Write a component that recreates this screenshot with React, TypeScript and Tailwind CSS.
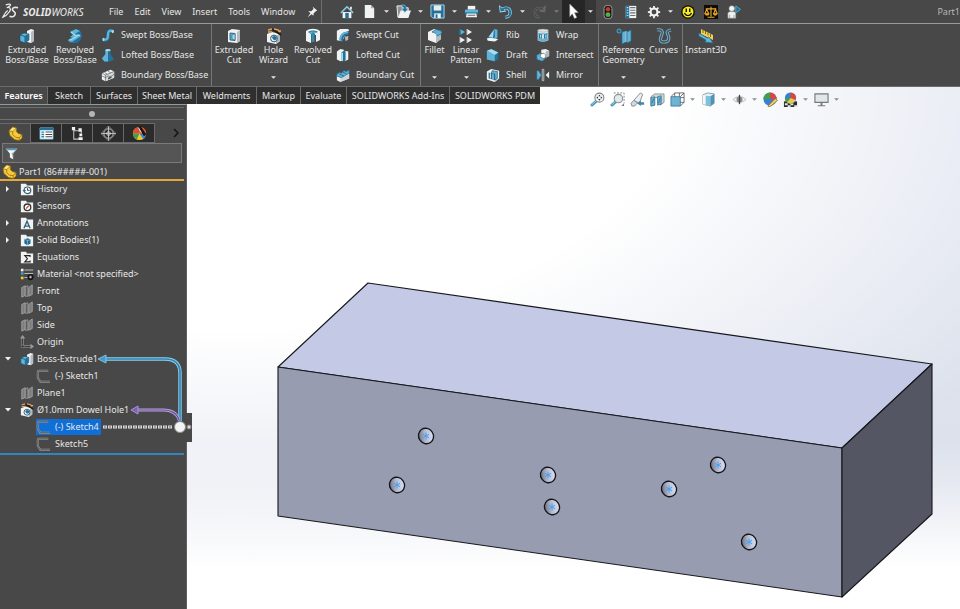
import React from "react";
import clsx from "clsx";

const LIGHT = "#f1f3f3";
const SHADE = "#b4babd";
const BLUE = "#5fb4d8";
const DEEP = "#23709a";
const SKY = "#a9dcf0";

// every drawing uses a 16 x 16 grid
const drawings: Record<string, React.ReactNode> = {
  extrudedBoss: (
    <>
      <path d="M8 3l4-2 3 1v11l-3 2-4-1z" fill={LIGHT} />
      <path d="M12 4l3-2v11l-3 2z" fill={SHADE} />
      <path d="M1 7l4-2 5 1v6l-4 3-5-2z" fill={BLUE} stroke="#174f6d" strokeWidth=".6" />
      <path d="M1 7l5 1.5 4-2.5M6 8.500V15" fill="none" stroke="#174f6d" strokeWidth=".8" />
      <path d="M6 8.500l4-2.500v6l-4 3z" fill={DEEP} />
    </>
  ),
  revolvedBoss: (
    <>
      <path d="M3 4c3-3 9-3 11 0 2 4 0 9-4 11H3c-2-1-1-4 1-4h4z" fill={DEEP} />
      <path d="M3 4l6-3 4 2-7 4 5-1 3 2-9 6-4-1 1-2 4-1-3-1 4-3z" fill={BLUE} />
      <path d="M4 4l5 4 4-1M3 12l6-3" stroke={SKY} strokeWidth="1.200" fill="none" />
    </>
  ),
  sweptBoss: (
    <>
      <path d="M3 13.500c4 1 5-1 5-5s1-6.500 5.500-5" fill="none" stroke={DEEP} strokeWidth="4" />
      <path d="M3 13c4 1 5-1 5-5s1-6 5.500-4.500" fill="none" stroke={BLUE} strokeWidth="2.600" />
      <ellipse cx="13.500" cy="4" rx="1.300" ry="2" fill={SKY} />
      <ellipse cx="2.800" cy="13.200" rx="1.200" ry="2" fill={SKY} />
    </>
  ),
  loftedBoss: (
    <>
      <path d="M5 2h6v5l4 6-5 2.500H4L1 12l4-5z" fill={DEEP} />
      <path d="M5 2h3v13.500H4L1 12l4-5z" fill={BLUE} />
      <ellipse cx="8" cy="2.500" rx="3" ry="1.300" fill={SKY} />
    </>
  ),
  boundaryBoss: (
    <>
      <path d="M1 6l10-4 4 2v7L5 15l-4-2z" fill={LIGHT} />
      <path d="M5 8l10-4v7L5 15z" fill="#d4d8d9" />
      <path d="M1 6l4 2 10-4M5 8v7M1 9l4 2 3-2 3 1 4-3M8 3.500l3 2M4 5l3 2" fill="none" stroke="#5d6265" strokeWidth=".8" />
      <path d="M8 11l4-1.500v2L8 13z" fill="#4b4f51" />
    </>
  ),
  extrudedCut: (
    <>
      <path d="M2 3l4-2 8 1v11l-3 2-9-1z" fill={LIGHT} />
      <path d="M11 4l3-2v11l-3 2z" fill={SHADE} />
      <path d="M4 5l5 .5v7L4 12z" fill={BLUE} stroke="#174f6d" strokeWidth=".8" />
      <path d="M6 7l3-1.500v7L6 10.500z" fill={SKY} stroke="#174f6d" strokeWidth=".5" />
    </>
  ),
  holeWizard: (
    <>
      <path d="M1 6l5-2 8 2v7l-4 3-9-2z" fill={LIGHT} />
      <path d="M10 8l4-2v7l-4 3z" fill={SHADE} />
      <circle cx="8" cy="10.500" r="3.400" fill={LIGHT} stroke="#2c5970" strokeWidth="1" />
      <path d="M6 9c2-2 4-1 5 1-1 3-4 3-5-1z" fill={DEEP} />
      <path d="M6 1l9 6" stroke="#2a1b14" strokeWidth="2" />
      <path d="M2 2l4-1M8 1l4 1 2 2M2 4h4M12 3h3" stroke="#e7a35c" strokeWidth="1.400" />
    </>
  ),
  revolvedCut: (
    <>
      <path d="M1 3c4-3 10-3 14 0v9l-4 2V7H6v8l-5-2z" fill={LIGHT} />
      <path d="M3 4c3-2 7-2 10 0l-3 1v9l-2-1-2 2V6z" fill={DEEP} />
      <path d="M4 4.500c2-1.500 6-1.500 8 0L9 6v8H7V6z" fill={BLUE} />
      <path d="M8 4.500V14" stroke="#174f6d" strokeWidth=".9" />
    </>
  ),
  sweptCut: (
    <>
      <path d="M1 3l4-2h9l1 2-4 2v2l-4 8-6-1z" fill={LIGHT} />
      <path d="M4 14C4 8 7 4 14 4v4c-4 0-6 2-6 7z" fill={DEEP} />
      <path d="M4 14C4 8 7 4 14 4v2c-5 0-8 3-8 8.500z" fill={BLUE} />
      <path d="M10 10l4-1v4l-3 2z" fill={SHADE} />
    </>
  ),
  loftedCut: (
    <>
      <path d="M1 4l4-3 4 1v12l-4 1-4-2z" fill={LIGHT} />
      <path d="M10 3l4 1v9l-4 2z" fill={LIGHT} />
      <path d="M6 5l3-2 2 1v10l-3 1.500-2-2z" fill={DEEP} />
      <path d="M6 5l2 .5v10l-2-2z" fill={SKY} />
    </>
  ),
  boundaryCut: (
    <>
      <path d="M1 8l10-3 4 1v6L5 16l-4-2z" fill={LIGHT} />
      <path d="M5 11l10-4v5L5 16z" fill="#cfd4d6" />
      <path d="M1 7l3-2 2 1 3-3 3 1 3-2v4L6 11 1 9z" fill={BLUE} stroke={DEEP} strokeWidth=".9" />
      <path d="M4 7l5 2M8 5l4 1.500" stroke="#174f6d" strokeWidth=".8" />
    </>
  ),
  fillet: (
    <>
      <path d="M1 4l6-3 7 2v8l-5 4-8-3z" fill={LIGHT} />
      <path d="M9 8l5-3v6l-5 4z" fill={SHADE} />
      <path d="M5 4l4-2.500 5 1.500c1 1 1 2 0 3L10 8c0-2-1-3-5-4z" fill={BLUE} stroke={DEEP} strokeWidth=".8" />
    </>
  ),
  linearPattern: (
    <>
      <path d="M2 1l5 3-5 3z" fill={BLUE} />
      <path d="M9 1l5 3-5 3zM2 9l5 3-5 3zM9 9l5 3-5 3z" fill={LIGHT} />
      <path d="M2 1v6" stroke={DEEP} strokeWidth="1.500" />
      <path d="M9 1v6M2 9v6M9 9v6" stroke={SHADE} strokeWidth="1" />
    </>
  ),
  rib: (
    <>
      <path d="M9 1l4 1v9l-3 4-9-2v-2l6-3z" fill={DEEP} />
      <path d="M9 2L3 10l5 1z" fill={SKY} />
      <path d="M9 1l4 1v9l-3 1V3z" fill={BLUE} />
      <path d="M1 12l3-1 7 1 3 1-4 2.500-8-1z" fill={LIGHT} />
    </>
  ),
  draft: (
    <>
      <path d="M1 3l5-2 8 4v8l-4 2-9-2z" fill={DEEP} />
      <path d="M1 3l9 5v7l-9-2z" fill={BLUE} />
      <path d="M1 3l5-2 8 4-4 3z" fill={SKY} />
    </>
  ),
  shell: (
    <>
      <path d="M1 4l5-3 9 2v9l-5 4-9-3z" fill={LIGHT} />
      <path d="M3 5l8 2v7L3 12z" fill={DEEP} />
      <path d="M7 3l6 1v8l-3 2V7L6 6z" fill={BLUE} stroke="#174f6d" strokeWidth=".7" />
      <path d="M5 6v6M8 7v6" stroke={LIGHT} strokeWidth="1" />
    </>
  ),
  wrap: (
    <>
      <path d="M2 2h12v12c-3 2-9 2-12 0z" fill={LIGHT} />
      <ellipse cx="8" cy="3" rx="6" ry="1.800" fill="#dfe3e4" stroke="#7c8386" strokeWidth=".5" />
      <path d="M2 5c4 1.500 8 1.500 12 0v2H2zM2 12h12v2c-4 1.500-8 1.500-12 0z" fill={BLUE} />
      <path d="M3 7h4v5H3zM9 7h4v5H9z" fill={DEEP} />
      <path d="M4.500 8h1.500v3H4.500zM10.500 8H12v3h-1.500z" fill={SKY} />
    </>
  ),
  intersect: (
    <>
      <path d="M6 2l5-1 4 2v6l-4 2-5-2z" fill={LIGHT} />
      <path d="M11 4l4-1v6l-4 2z" fill={SHADE} />
      <path d="M1 8l4-2 3 1v4l3 1-4 3-6-2z" fill={BLUE} stroke={DEEP} strokeWidth=".8" />
      <path d="M5 7l4-1 2 2v3l-3 1-3-2z" fill="#fff" stroke="#555" strokeWidth=".7" />
    </>
  ),
  mirror: (
    <>
      <path d="M1 3h2l3 5-3 5H1z" fill={BLUE} stroke={DEEP} strokeWidth=".6" />
      <path d="M15 4l-4 4 4 4z" fill={LIGHT} />
      <path d="M7 1.500h2v13H7z" fill="#6e7679" stroke="#d7dbdc" strokeWidth=".7" />
    </>
  ),
  reference: (
    <>
      <path d="M6 4l4-1v11l-4 2zM11 4l4-2v11l-4 2z" fill={BLUE} stroke={DEEP} strokeWidth=".7" />
      <path d="M10 3v11" stroke="#d7f0fa" strokeWidth=".8" />
      <circle cx="3" cy="3" r="2" fill="none" stroke={BLUE} strokeWidth="1" />
      <path d="M0 3h6M3 0v6" stroke={DEEP} strokeWidth=".7" />
    </>
  ),
  curves: (
    <>
      <path d="M1 2c4-1 6 1 5 4s-4 8 2 8 5-5 4-7-2-4 3-5" fill="none" stroke="#7fb2cb" strokeWidth="3.200" />
      <path d="M1 2c4-1 6 1 5 4s-4 8 2 8 5-5 4-7-2-4 3-5" fill="none" stroke="#39576a" strokeWidth="1.400" />
    </>
  ),
  instant3d: (
    <>
      <path d="M3 1l12 6v5L3 6z" fill="#f5cf56" />
      <path d="M5 2v3M7.500 3v3M10 4.500v3M12.500 6v3" stroke="#7a5a10" strokeWidth=".9" />
      <path d="M1 5l8 5 2-1 4 6-8-1 1-2-7-4z" fill={BLUE} stroke={DEEP} strokeWidth=".7" />
    </>
  ),
  pin: (
    <path d="M9 1l6 5-2 1-3 3v3L7.500 11 2 15l4-5.500L3 7h4l3-3z" fill={LIGHT} />
  ),
  home: (
    <>
      <path d="M3 8h10v7H3z" fill={LIGHT} />
      <path d="M6 9h4v6H6z" fill={DEEP} />
      <path d="M1 9l7-7 7 7" fill="none" stroke="#8fcbe3" strokeWidth="1.800" />
      <path d="M11.500 2h2v3h-2z" fill={LIGHT} />
    </>
  ),
  blank: (
    <>
      <path d="M3 1h6.500L13 4.500V15H3z" fill={LIGHT} />
      <path d="M9.500 1v3.500H13z" fill="#a7adaf" />
    </>
  ),
  open: (
    <>
      <path d="M1 2h5l1 2h6v10H2z" fill="#8d9496" stroke={LIGHT} strokeWidth="1" />
      <path d="M5 7h11l-3 8H2z" fill={LIGHT} />
      <path d="M6 1c4 0 5 1 5 4h2l-3.500 4L6 5h2c0-1.500 0-2-2-2z" fill={DEEP} stroke={SKY} strokeWidth=".6" />
    </>
  ),
  save: (
    <>
      <path d="M1 1h14v14H3l-2-2z" fill={DEEP} stroke={SKY} strokeWidth="1" />
      <path d="M4 1.500h8V7H4z" fill="#e8eced" />
      <path d="M4.500 10h7v5h-7z" fill={LIGHT} />
      <path d="M6 11h2v4H6z" fill={DEEP} />
    </>
  ),
  print: (
    <>
      <path d="M4 2h8v4H4z" fill={LIGHT} />
      <path d="M1 6h14v5H1z" fill={BLUE} />
      <path d="M1 9h14v2H1z" fill={DEEP} />
      <path d="M3 10h10l1 4H2z" fill={LIGHT} />
      <path d="M4 12h8" stroke="#596063" strokeWidth="1" />
    </>
  ),
  undo: (
    <>
      <path d="M4 6c4-3 9-2 9 3 0 3-2 5-5 5" fill="none" stroke={SKY} strokeWidth="3.400" />
      <path d="M1 1l1 8 7-1z" fill={SKY} />
      <path d="M4 6c4-3 9-2 9 3 0 3-2 5-5 5" fill="none" stroke={DEEP} strokeWidth="2" />
      <path d="M2 3l.8 5 4.500-.7z" fill={DEEP} />
    </>
  ),
  redo: (
    <>
      <path d="M12 6c-4-3-9-2-9 3 0 3 2 5 5 5" fill="none" stroke="#686868" strokeWidth="2.800" />
      <path d="M15 1l-1 8-7-1z" fill="#686868" />
      <path d="M12 6c-4-3-9-2-9 3 0 3 2 5 5 5" fill="none" stroke="#484848" strokeWidth="1.400" />
    </>
  ),
  cursor: (
    <path d="M4 0l9 9-4 .3 2.500 5-2.500 1.200-2.300-5L4 13.500z" fill="#fff" stroke="#9b9b9b" strokeWidth=".5" />
  ),
  traffic: (
    <>
      <rect x="3.500" y="0.500" width="9" height="15" rx="3.500" fill="#141414" stroke="#a8a8a8" strokeWidth="1" />
      <circle cx="8" cy="4.800" r="2.600" fill="#c23b2c" />
      <circle cx="8" cy="11" r="2.800" fill="#5dab48" />
    </>
  ),
  options: (
    <>
      <path d="M2 1h12v14H2z" fill={LIGHT} />
      <path d="M2 1h4v14H2z" fill={DEEP} />
      <path d="M3 3h2M3 6h2M3 9h2M3 12h2" stroke={SKY} strokeWidth="1.300" />
      <path d="M7 3h6M7 6h6M7 9h6M7 12h6" stroke="#6b7174" strokeWidth="1.300" />
    </>
  ),
  gear: (
    <>
      <circle cx="8" cy="8" r="4" fill="none" stroke={LIGHT} strokeWidth="2.400" />
      <path d="M8 1v3M8 12v3M1 8h3M12 8h3M3 3l2 2M11 11l2 2M13 3l-2 2M5 11l-2 2" stroke={LIGHT} strokeWidth="2" />
    </>
  ),
  smiley: (
    <>
      <circle cx="8" cy="8" r="7.800" fill="#0d0d0d" />
      <circle cx="8" cy="8" r="6.300" fill="#f8ec1c" />
      <path d="M6 4v4M10 4v4" stroke="#111" strokeWidth="1.600" />
      <path d="M4 9c1 4 7 4 8 0" fill="none" stroke="#111" strokeWidth="1.400" />
    </>
  ),
  scales: (
    <>
      <path d="M0 0h16v16H0z" fill="#0e0c08" />
      <path d="M8 2v11M4 14h8M2 4.500h12M3 5l-2 5h4.500zM13 5l-2 5h4z" fill="none" stroke="#e9a92d" strokeWidth="1.300" />
      <path d="M1 10h5l-1 2H2zM10.500 10H15l-1 2h-2.500z" fill="#e9a92d" />
    </>
  ),
  user: (
    <>
      <circle cx="5.500" cy="4" r="3.200" fill={LIGHT} stroke="#8c8c8c" strokeWidth=".6" />
      <path d="M1 15V9c1-2 8-2 9 0v6z" fill={LIGHT} stroke="#8c8c8c" strokeWidth=".6" />
      <path d="M3 11v4M8 11v4" stroke="#8c8c8c" strokeWidth=".8" />
      <path d="M10 1l5.500 4L10 9z" fill={DEEP} stroke={BLUE} strokeWidth=".9" />
    </>
  ),
  zoomFit: (
    <>
      <path d="M2 14l4.500-4" stroke="#4a94b8" strokeWidth="3" strokeLinecap="round" />
      <path d="M2 13.500l4-3.500" stroke="#a5d6e9" strokeWidth="1" strokeLinecap="round" />
      <circle cx="10" cy="6" r="4.800" fill="#eef1f3" stroke="#7d8487" strokeWidth="1.100" />
      <path d="M10 2.800l1.200 1.700H8.800zM10 9.200l1.200-1.700H8.800zM6.800 6l1.700-1.200v2.400zM13.200 6l-1.700-1.200v2.400z" fill="#2c3033" />
    </>
  ),
  zoomArea: (
    <>
      <path d="M4 1h11v11" fill="none" stroke="#787e81" strokeWidth="1" strokeDasharray="2 1.500" />
      <path d="M2 14l4-3.500" stroke="#4a94b8" strokeWidth="3" strokeLinecap="round" />
      <path d="M2 13.500l3.500-3" stroke="#a5d6e9" strokeWidth="1" strokeLinecap="round" />
      <circle cx="9" cy="7" r="4.500" fill="#e1e9ed" stroke="#8b9295" strokeWidth="1.200" />
      <path d="M12 15h3v-3z" fill="#787e81" />
    </>
  ),
  previousView: (
    <>
      <path d="M4 9l7-8 2.500 1.500L10 12z" fill="#eceff1" stroke="#868c90" strokeWidth="1" />
      <path d="M1 12l3-3 4 2.500L5 15H2z" fill="#d3d8db" stroke="#868c90" strokeWidth="1" />
      <path d="M7.500 12l4-3v2H15v2.500h-3.500V15z" fill="#3c88ae" />
    </>
  ),
  section: (
    <>
      <path d="M1 5l4-3h10v9l-4 3V6H5v8l-4 1z" fill="#cdd5d9" stroke="#7b8488" strokeWidth=".8" />
      <path d="M1 6l4-1v9l-4 1zM8 5l4-1v9l-4 1z" fill={BLUE} stroke="#3f7690" strokeWidth=".8" />
      <path d="M2 12l2-5M9 12l2-6" stroke={DEEP} strokeWidth=".9" />
    </>
  ),
  orientation: (
    <>
      <path d="M5 1h10v10H5z" fill="#fff" stroke="#565c60" strokeWidth=".9" />
      <path d="M1 5l4-4M11 5l4-4M11 15l4-4M10 1v10M5 6h10" stroke="#565c60" strokeWidth=".9" fill="none" />
      <path d="M1 5h10v10H1z" fill="#6fb4d3" stroke="#3b7693" strokeWidth=".9" />
    </>
  ),
  display: (
    <>
      <path d="M2 3l5-2 7 1v10l-4 3-8-2z" fill="#e4f1f7" stroke="#6f8792" strokeWidth=".8" />
      <path d="M2 3l3 .7v10L2 13z" fill="#f6f8f9" />
      <path d="M5 4l5 .6V15l-5-1z" fill="#7fc0dc" />
      <path d="M10 4.600L14 2v10l-4 3z" fill="#4d94b7" />
    </>
  ),
  eye: (
    <>
      <path d="M1 8c4-4 10-4 14 0-4 4-10 4-14 0z" fill="#f1f1f1" stroke="#b4b4b4" strokeWidth=".9" />
      <circle cx="8" cy="8" r="3.200" fill="#8a8a8a" />
      <path d="M8 3v10" stroke="#444" strokeWidth="1.300" />
    </>
  ),
  appearance: (
    <>
      <circle cx="7.500" cy="7.500" r="7" fill="#3b7fd0" />
      <path d="M7.500 7.500V.5a7 7 0 00-7 7z" fill="#3fa04a" />
      <path d="M7.500 7.500V.5A7 7 0 0114.500 8z" fill="#d9483a" />
      <path d="M6 14l7-7 2.500 2-7 6-3 .8z" fill="#f0cf68" stroke="#7d5b26" strokeWidth=".7" />
    </>
  ),
  scene: (
    <>
      <path d="M1 10h14v6H1z" fill="#2d2d2d" />
      <path d="M2 12h3v2H2zM8 12h3v2H8zM12 14h3v2h-3zM5 14h3v2H5z" fill="#e5e5e5" />
      <circle cx="8" cy="6.500" r="6" fill="#3b7fd0" />
      <path d="M8 6.500V.5a6 6 0 015.500 8z" fill="#d9483a" />
      <path d="M8 6.500l5.500 2A6 6 0 014 11z" fill="#e6c84a" />
      <path d="M8 6.500L4 11A6 6 0 012 6z" fill="#3fa04a" />
    </>
  ),
  monitor: (
    <>
      <path d="M1 2h14v9H1z" fill="#e3e6e8" stroke="#73797c" strokeWidth="1.200" />
      <path d="M7 11h2v3H7zM4 14h8v1.300H4z" fill="#73797c" />
    </>
  ),
  part: (
    <>
      <path d="M1 5l4-4 4 1v4l2 2 4 1v4l-3 2.500-5-1-5-4.500z" fill="#f5c93a" stroke="#8d6a0d" strokeWidth=".8" />
      <path d="M1 5l4 1v3l3 3 4 .5v3M5 6l4-4M12 12.500L15 9" fill="none" stroke="#8d6a0d" strokeWidth=".8" />
      <path d="M5 1.500l3 .8L5 5.200 2.200 4.500z" fill="#fbe58a" />
    </>
  ),
  properties: (
    <>
      <path d="M1 2h14v12H1z" fill="#fff" stroke="#6ab5d6" strokeWidth=".8" />
      <path d="M1 2h14v2.500H1z" fill={DEEP} />
      <path d="M2.500 6.500h3M2.500 9h3M2.500 11.500h3" stroke="#3181ab" strokeWidth="1.500" />
      <path d="M7 6.500h7M7 9h7M7 11.500h7" stroke="#44494b" strokeWidth="1.100" />
    </>
  ),
  config: (
    <>
      <path d="M4 4v10h5M4 5h5M12 5v3" fill="none" stroke="#c4c4c4" strokeWidth="1.100" />
      <path d="M2 1h3.500v3.500H2zM9 2.500h3.500V6H9zM10 8h3v3h-3zM9 12h4.500v3H9z" fill={LIGHT} />
    </>
  ),
  dimxpert: (
    <>
      <circle cx="8" cy="8" r="5" fill="none" stroke="#8f8f8f" strokeWidth="1.600" />
      <path d="M8 0v16M0 8h16" stroke="#c4c4c4" strokeWidth="1" />
      <path d="M8 0L0 8l8 8 8-8z" fill="none" stroke="#8a8a8a" strokeWidth=".9" />
      <circle cx="8" cy="8" r="2" fill="none" stroke="#ddd" strokeWidth=".9" />
    </>
  ),
  displayManager: (
    <>
      <circle cx="8" cy="8" r="7" fill="#f0c832" />
      <path d="M8 8V1a7 7 0 00-7 7z" fill="#e04a38" />
      <path d="M8 8H1a7 7 0 004 6.300z" fill="#3fa04a" />
      <path d="M8 8l7 1a7 7 0 01-3 5z" fill="#3c83d3" />
      <path d="M8 8V1a7 7 0 017 8z" fill="#e04a38" />
      <path d="M8 1l6 9" stroke="#151515" strokeWidth="3" />
      <path d="M7 2l3 5" stroke="#f5f5f5" strokeWidth="1" />
    </>
  ),
  filter: (
    <>
      <path d="M1 2h14l-5 6v7l-4-2V8z" fill="#f4f8fa" />
      <path d="M1 2h14l-1.500 2h-11z" fill="#4a9cc4" />
      <path d="M8 8l6-5-4 5v6z" fill="#9fb4be" />
    </>
  ),
  history: (
    <>
      <path d="M1 2h6l1 2h7v11H1z" fill={LIGHT} />
      <circle cx="8.500" cy="9.500" r="3.800" fill="#fff" stroke="#3d6173" strokeWidth="1.400" />
      <path d="M8.500 7v2.500h2.500" stroke="#222" fill="none" strokeWidth="1" />
      <path d="M3 9l2 3 2-3z" fill={DEEP} />
    </>
  ),
  sensors: (
    <>
      <path d="M1 2h6l1 2h7v11H1z" fill={LIGHT} />
      <circle cx="8.500" cy="9.500" r="3.800" fill="#fff" stroke="#333" strokeWidth="1.500" />
      <path d="M7 11l3-3.500" stroke="#d13a2a" strokeWidth="1.500" />
    </>
  ),
  annotations: (
    <>
      <path d="M1 2h6l1 2h7v11H1z" fill={LIGHT} />
      <path d="M4.500 14L8 6l3.500 8M6 11.500h4" stroke="#2a5f7c" strokeWidth="1.500" fill="none" />
    </>
  ),
  bodies: (
    <>
      <path d="M1 2h6l1 2h7v11H1z" fill={LIGHT} />
      <path d="M5 7l4-1 3 1.500V12l-3.500 2L5 12z" fill="#1d6b94" />
      <path d="M5 7l3.500 1.500L12 7.500M8.500 8.500V14" stroke="#8ecbe5" strokeWidth=".8" fill="none" />
    </>
  ),
  equations: (
    <>
      <path d="M1 2h6l1 2h7v11H1z" fill={LIGHT} />
      <path d="M11.500 8V6.500h-6l3 3.500-3 3.500h6V12" stroke="#222" strokeWidth="1.300" fill="none" />
    </>
  ),
  material: (
    <>
      <path d="M1 2h3v3H1z" fill={LIGHT} />
      <path d="M1 6h3v3H1z" fill="#3d9bca" />
      <path d="M1 11h3v3H1z" fill="#f0cb35" />
      <path d="M5 3.500h10M5 7.500h10M5 12h4" stroke="#b9b9b9" strokeWidth="1.200" />
      <circle cx="12" cy="11.500" r="2.800" fill="#555" stroke="#111" strokeWidth="1.500" />
      <circle cx="12" cy="11.500" r="1" fill="#ddd" />
    </>
  ),
  plane: (
    <>
      <path d="M2 4l4-2v11l-4 2zM10 4l4-3v11l-4 2z" fill="#7d7d7d" stroke="#a8a8a8" strokeWidth=".9" />
      <path d="M6 3l3-1v12H6z" fill="#5d5d5d" stroke="#a8a8a8" strokeWidth=".8" />
    </>
  ),
  origin: (
    <>
      <path d="M3 2v11h11" fill="none" stroke="#9b9b9b" strokeWidth="2.600" />
      <path d="M3 2v11h11" fill="none" stroke="#222" strokeWidth="1" />
      <path d="M0 4l3-4 3 4zM12 10l4 3-4 3z" fill="#9b9b9b" />
      <circle cx="3" cy="13" r="1.700" fill="#333" stroke="#9b9b9b" strokeWidth=".6" />
    </>
  ),
  sketch: (
    <>
      <path d="M14 2H3c-1 0-1 0-1 1v7l3 4.500h11" fill="none" stroke="#9d9d9d" strokeWidth="2.200" />
      <path d="M14 2H3c-1 0-1 0-1 1v7l3 4.500h11" fill="none" stroke="#4a4a4a" strokeWidth=".9" />
    </>
  ),
};

function Icon(props: { name: string; className?: string }) {
  return (
    <svg
      viewBox="0 0 16 16"
      aria-hidden="true"
      className={clsx("shrink-0", props.className ?? "size-4")}
    >
      {drawings[props.name]}
    </svg>
  );
}

function Caret() {
  return (
    <svg viewBox="0 0 6 3" aria-hidden="true" className="h-[3px] w-[5px]">
      <path d="M0 0h6L3 3z" fill="currentColor" />
    </svg>
  );
}

const menus = ["File", "Edit", "View", "Insert", "Tools", "Window"];

const quickFiles = [
  { icon: "blank", label: "New" },
  { icon: "open", label: "Open" },
  { icon: "save", label: "Save" },
  { icon: "print", label: "Print" },
  { icon: "undo", label: "Undo" },
  { icon: "redo", label: "Redo", disabled: true },
  { icon: "cursor", label: "Select", active: true },
];

function QuickButton(props: { icon: string; label: string }) {
  return (
    <button aria-label={props.label} className="flex h-full w-[23px] items-center justify-center">
      <Icon name={props.icon} className="size-[14px]" />
    </button>
  );
}

function TitleBar() {
  return (
    <header className="flex h-6 items-center border-b border-[#969b9b] bg-[#484848]">
      <div className="flex w-[103px] items-center gap-1 pl-[2px] text-[#e8e8e8]">
        <svg viewBox="0 0 18 18" aria-hidden="true" className="size-[17px]">
          <path
            d="M4 2c3-1 5-1 5 0S7 4 5 5c3-1 5 1 3 4s-4 5-7 6c1-2 2-5 5-7"
            fill="none"
            stroke="currentColor"
            strokeWidth="1.400"
          />
          <path
            d="M17 5c-3-1-6 0-6 2s4 2 3 5-4 3-6 2"
            fill="none"
            stroke="currentColor"
            strokeWidth="1.700"
          />
        </svg>
        <span className="text-[10px] italic">
          <b>SOLID</b>WORKS
        </span>
      </div>

      <nav className="flex h-full items-center border-r border-[#6e6e6e] pr-[3px]">
        {menus.map((menu) => (
          <button key={menu} className="pr-[5px] pl-[6px]">
            {menu}
          </button>
        ))}
        <button aria-label="Keep menu open" className="pl-[6px]">
          <Icon name="pin" className="size-3" />
        </button>
      </nav>

      <div className="ml-[13px] flex h-full items-center">
        <QuickButton icon="home" label="Home" />
        {quickFiles.map((item) => (
          <div
            key={item.label}
            className={clsx(
              "flex h-full w-[34px] items-center",
              item.active && "bg-[#363636]",
              item.disabled ? "text-[#7c7c7c]" : "text-[#e4e4e4]"
            )}
          >
            <button
              aria-label={item.label}
              disabled={item.disabled}
              className={clsx(
                "flex h-full w-[23px] items-center justify-center",
                item.active && "bg-[#262626]"
              )}
            >
              <Icon name={item.icon} className="size-[15px]" />
            </button>
            <button aria-label={`${item.label} menu`} className="flex w-[11px] justify-center">
              <Caret />
            </button>
          </div>
        ))}
        <QuickButton icon="traffic" label="Rebuild" />
        <QuickButton icon="options" label="File properties" />
        <QuickButton icon="gear" label="Options" />
        <button aria-label="Options menu" className="flex w-[11px] justify-center">
          <Caret />
        </button>
        <QuickButton icon="smiley" label="Feedback" />
        <QuickButton icon="scales" label="Compare" />
        <QuickButton icon="user" label="Login" />
      </div>

      <span className="ml-auto text-[#b9b9b9]">Part1</span>
    </header>
  );
}

interface ToolProps {
  icon: string;
  label: string;
  menu?: boolean;
  width: string;
}

function BigTool({ icon, label, menu, width }: ToolProps) {
  return (
    <button className={clsx("flex h-full flex-col items-center pt-1 pb-[7px]", width)}>
      <Icon name={icon} />
      <span className="mt-px text-center leading-[10px] whitespace-pre">{label}</span>
      {menu && (
        <span className="mt-auto">
          <Caret />
        </span>
      )}
    </button>
  );
}

function ToolColumn({ tools, width }: { tools: string[][]; width?: string }) {
  return (
    <div className={clsx("flex flex-col pt-px", width)}>
      {tools.map(([icon, label]) => (
        <button key={label} className="flex h-5 items-center gap-[6px] whitespace-nowrap">
          <Icon name={icon} className="size-[14px]" />
          {label}
        </button>
      ))}
    </div>
  );
}

function Ribbon() {
  return (
    <section
      aria-label="Features"
      className="flex h-[63px] items-stretch divide-x divide-[#767676] border-b border-[#6b6b6b] bg-[#484848]"
    >
      <div className="flex w-[212px] pl-[3px]">
        <BigTool icon="extrudedBoss" label={"Extruded\nBoss/Base"} width="w-[48px]" />
        <BigTool icon="revolvedBoss" label={"Revolved\nBoss/Base"} width="w-[48px]" />
        <ToolColumn
          width="ml-[2px]"
          tools={[
            ["sweptBoss", "Swept Boss/Base"],
            ["loftedBoss", "Lofted Boss/Base"],
            ["boundaryBoss", "Boundary Boss/Base"],
          ]}
        />
      </div>
      <div className="flex w-[209px] pl-[2px]">
        <BigTool icon="extrudedCut" label={"Extruded\nCut"} width="w-[40px]" />
        <BigTool icon="holeWizard" label={"Hole\nWizard"} width="w-[39px]" menu />
        <BigTool icon="revolvedCut" label={"Revolved\nCut"} width="w-[40px]" />
        <ToolColumn
          width="ml-[3px]"
          tools={[
            ["sweptCut", "Swept Cut"],
            ["loftedCut", "Lofted Cut"],
            ["boundaryCut", "Boundary Cut"],
          ]}
        />
      </div>
      <div className="flex w-[178px]">
        <BigTool icon="fillet" label="Fillet" width="w-[27px]" menu />
        <BigTool icon="linearPattern" label={"Linear\nPattern"} width="w-[36px]" menu />
        <ToolColumn
          width="ml-[2px] w-[50px]"
          tools={[
            ["rib", "Rib"],
            ["draft", "Draft"],
            ["shell", "Shell"],
          ]}
        />
        <ToolColumn
          tools={[
            ["wrap", "Wrap"],
            ["intersect", "Intersect"],
            ["mirror", "Mirror"],
          ]}
        />
      </div>
      <div className="flex w-[84px]">
        <BigTool icon="reference" label={"Reference\nGeometry"} width="w-[49px]" menu />
        <BigTool icon="curves" label="Curves" width="w-[31px]" menu />
      </div>
      <div className="flex">
        <BigTool icon="instant3d" label="Instant3D" width="w-[46px]" />
      </div>
    </section>
  );
}

const ribbonTabs = [
  { label: "Features", width: "w-[48px]" },
  { label: "Sketch", width: "w-[43px]" },
  { label: "Surfaces", width: "w-[47px]" },
  { label: "Sheet Metal", width: "w-[59px]" },
  { label: "Weldments", width: "w-[60px]" },
  { label: "Markup", width: "w-[44px]" },
  { label: "Evaluate", width: "w-[46px]" },
  { label: "SOLIDWORKS Add-Ins", width: "w-[103px]" },
  { label: "SOLIDWORKS PDM", width: "w-[90px]" },
];

const viewTools = [
  { icon: "zoomFit", label: "Zoom to fit" },
  { icon: "zoomArea", label: "Zoom to area" },
  { icon: "previousView", label: "Previous view" },
  { icon: "section", label: "Section view" },
  { icon: "orientation", label: "View orientation", menu: true },
  { icon: "display", label: "Display style", menu: true },
  { icon: "eye", label: "Hide/show items", menu: true },
  { icon: "appearance", label: "Edit appearance" },
  { icon: "scene", label: "Apply scene", menu: true },
  { icon: "monitor", label: "View settings", menu: true },
];

function TabStrip() {
  return (
    <div className="relative flex h-[17px] items-start">
      {ribbonTabs.map((tab, index) => (
        <button
          key={tab.label}
          className={clsx(
            "h-full shrink-0 border-r border-[#6b6b6b] text-center whitespace-nowrap last-of-type:border-r-0",
            tab.width,
            index === 0 ? "bg-[#484848] font-semibold text-white" : "bg-[#2f2f2f]"
          )}
        >
          {tab.label}
        </button>
      ))}
      <div className="ml-[47px] flex h-6 shrink-0 items-center">
        {viewTools.map((tool) => (
          <div key={tool.icon} className="flex items-center text-[#8b8f94]">
            <button aria-label={tool.label} className="flex w-5 justify-center">
              <Icon name={tool.icon} className="size-[15px]" />
            </button>
            {tool.menu && (
              <button aria-label={`${tool.label} menu`} className="flex w-[11px] justify-center">
                <Caret />
              </button>
            )}
          </div>
        ))}
      </div>
    </div>
  );
}

const treeItems = [
  { icon: "history", label: "History", arrow: "closed" },
  { icon: "sensors", label: "Sensors" },
  { icon: "annotations", label: "Annotations", arrow: "closed" },
  { icon: "bodies", label: "Solid Bodies(1)", arrow: "closed" },
  { icon: "equations", label: "Equations" },
  { icon: "material", label: "Material <not specified>" },
  { icon: "plane", label: "Front" },
  { icon: "plane", label: "Top" },
  { icon: "plane", label: "Side" },
  { icon: "origin", label: "Origin" },
  { icon: "extrudedBoss", label: "Boss-Extrude1", arrow: "open" },
  { icon: "sketch", label: "(-) Sketch1", child: true },
  { icon: "plane", label: "Plane1" },
  { icon: "holeWizard", label: "Ø1.0mm Dowel Hole1", arrow: "open" },
  { icon: "sketch", label: "(-) Sketch4", child: true, selected: true },
  { icon: "sketch", label: "Sketch5", child: true },
];

// parent/child references drawn over the tree rows
function Relations() {
  return (
    <svg
      viewBox="0 0 192 272"
      aria-hidden="true"
      className="pointer-events-none absolute top-0 left-0 h-[272px] w-[192px]"
    >
      <path d="M184 232h8v29h-8z" fill="#484848" />
      <path d="M104 178h61c9 0 15 4 15 14v48" fill="none" stroke="#8fd0f0" strokeWidth="3.400" />
      <path d="M104 178h61c9 0 15 4 15 14v48" fill="none" stroke="#2d86b4" strokeWidth="1.600" />
      <path d="M98 178l8-4v8z" fill="#3f9ccb" stroke="#8fd0f0" strokeWidth=".8" />
      <path d="M137 229h26c8 0 14 3 16 10" fill="none" stroke="#b9a4dc" strokeWidth="2.800" />
      <path d="M137 229h26c8 0 14 3 16 10" fill="none" stroke="#6b4e9e" strokeWidth="1.200" />
      <path d="M131 229l7-4v8z" fill="#7d5fb6" stroke="#b9a4dc" strokeWidth=".8" />
      <path d="M103 246h70" stroke="#d8d8d8" strokeWidth="3" strokeDasharray="4 1" />
      <path d="M104 246h69" stroke="#6a6a6a" strokeWidth="1" strokeDasharray="2 3" />
      <circle cx="180" cy="246" r="5.500" fill="#f4f4f4" stroke="#8c8c8c" strokeWidth="1" />
      <circle cx="189" cy="246" r="2" fill="#d8d8d8" stroke="#8a8a8a" strokeWidth="1" />
    </svg>
  );
}

function FeatureTree() {
  const managers = [
    { icon: "part", label: "FeatureManager" },
    { icon: "properties", label: "PropertyManager" },
    { icon: "config", label: "ConfigurationManager" },
    { icon: "dimxpert", label: "DimXpertManager" },
    { icon: "displayManager", label: "DisplayManager" },
  ];

  return (
    <aside className="relative flex w-[187px] shrink-0 flex-col border-t border-r border-t-[#8e9c9c] border-r-[#5f5f5f] bg-[#484848] pr-[2px]">
      <div className="mt-[2px] flex h-[13px] items-center justify-center border-y border-[#6f6f6f]">
        <span className="size-[6px] rounded-full bg-[#b5b5b5]" />
      </div>

      <div className="mt-[3px] flex h-5 items-center">
        {managers.map((item, index) => (
          <button
            key={item.icon}
            aria-label={item.label}
            className={clsx(
              "flex h-full w-[31px] items-center justify-center border-t border-r border-[#6a6a6a]",
              index > 0 && "border-b bg-[#2b2b2b]"
            )}
          >
            <Icon name={item.icon} className="size-[15px]" />
          </button>
        ))}
        <button aria-label="More tabs" className="ml-auto pr-1 text-[#161616]">
          <svg viewBox="0 0 8 10" aria-hidden="true" className="h-[10px] w-2">
            <path d="M2 1l4 4-4 4" fill="none" stroke="currentColor" strokeWidth="1.600" />
          </svg>
        </button>
      </div>

      <label className="mx-[2px] flex h-5 items-center border border-[#7a7a7a] bg-[#555555] pl-[2px]">
        <Icon name="filter" className="size-[13px]" />
        <input aria-label="Filter" className="ml-1 w-full bg-transparent outline-none" />
      </label>

      <div className="flex h-[18px] items-center gap-[2px] border-b-2 border-[#e3a93c] pt-px pl-[2px]">
        <Icon name="part" className="size-[15px]" />
        Part1 (86#####-001)
      </div>

      <ul className="relative border-b-2 border-[#3187bd]">
        {treeItems.map((item) => (
          <li
            key={item.label}
            className={clsx(
              "flex h-[17px] items-center pb-px",
              item.child ? "pl-[36px]" : "pl-[5px]"
            )}
          >
            {!item.child && (
              <svg viewBox="0 0 6 6" aria-hidden="true" className="mr-[9px] size-[6px]">
                {item.arrow === "closed" && <path d="M1 0l3 3-3 3z" fill="#f0f0f0" />}
                {item.arrow === "open" && <path d="M0 1h6L3 4.500z" fill="#f0f0f0" />}
              </svg>
            )}
            <span
              className={clsx(
                "flex h-4 items-center pr-[2px]",
                item.child ? "gap-[5px]" : "gap-[3px]",
                item.selected && "bg-[#0f6fd6]"
              )}
            >
              <Icon name={item.icon} className="size-[14px]" />
              {item.label}
            </span>
          </li>
        ))}
        <Relations />
      </ul>
    </aside>
  );
}

const holes = [
  [426, 436],
  [397, 485],
  [548, 475],
  [552, 507],
  [669, 489],
  [718, 465],
  [749, 542],
];

function Model() {
  return (
    <svg
      viewBox="0 87 960 522"
      role="img"
      aria-label="Part1"
      className="absolute inset-0 h-full w-full"
    >
      <defs>
        <linearGradient id="bore" x1="0" y1="0.100" x2="1" y2="0.700">
          <stop offset="0.100" stopColor="#6a6d79" />
          <stop offset="0.500" stopColor="#b4b9cc" />
          <stop offset="1" stopColor="#dfe3f4" />
        </linearGradient>
      </defs>
      <g stroke="#16171b" strokeWidth="1.100" strokeLinejoin="round">
        <path d="M368 283l564 81-90 84-564-81z" fill="#c4cae6" />
        <path d="M278 367l564 81v149l-564-81z" fill="#979cb0" />
        <path d="M842 448l90-84v150l-90 83z" fill="#545763" />
      </g>
      {holes.map(([x, y]) => (
        <g key={x} transform={`translate(${x} ${y})`}>
          <ellipse rx="7.400" ry="7.900" transform="rotate(-35)" fill="url(#bore)" stroke="#15161a" strokeWidth="1.300" />
          <path d="M0-3.500v7M-3-1.700l6 3.400M3-1.700l-6 3.400" stroke="#3fa2fa" strokeWidth="1" />
        </g>
      ))}
    </svg>
  );
}

export default function App() {
  return (
    <div className="flex min-h-screen flex-col overflow-hidden bg-white font-['Noto_Sans','Open_Sans',sans-serif] text-[9px] leading-3 text-[#e6e6e6]">
      <TitleBar />
      <Ribbon />
      <main className="relative flex flex-1 flex-col bg-[radial-gradient(ellipse_800px_440px_at_24%_0%,#ffffff_55%,#ffffff00_115%),linear-gradient(to_bottom,#dde2ee_0%,#dce1ec_68%,#e6e9f1_76%,#ffffff_92%)]">
        <Model />
        <TabStrip />
        <div className="flex flex-1">
          <FeatureTree />
        </div>
      </main>
    </div>
  );
}
